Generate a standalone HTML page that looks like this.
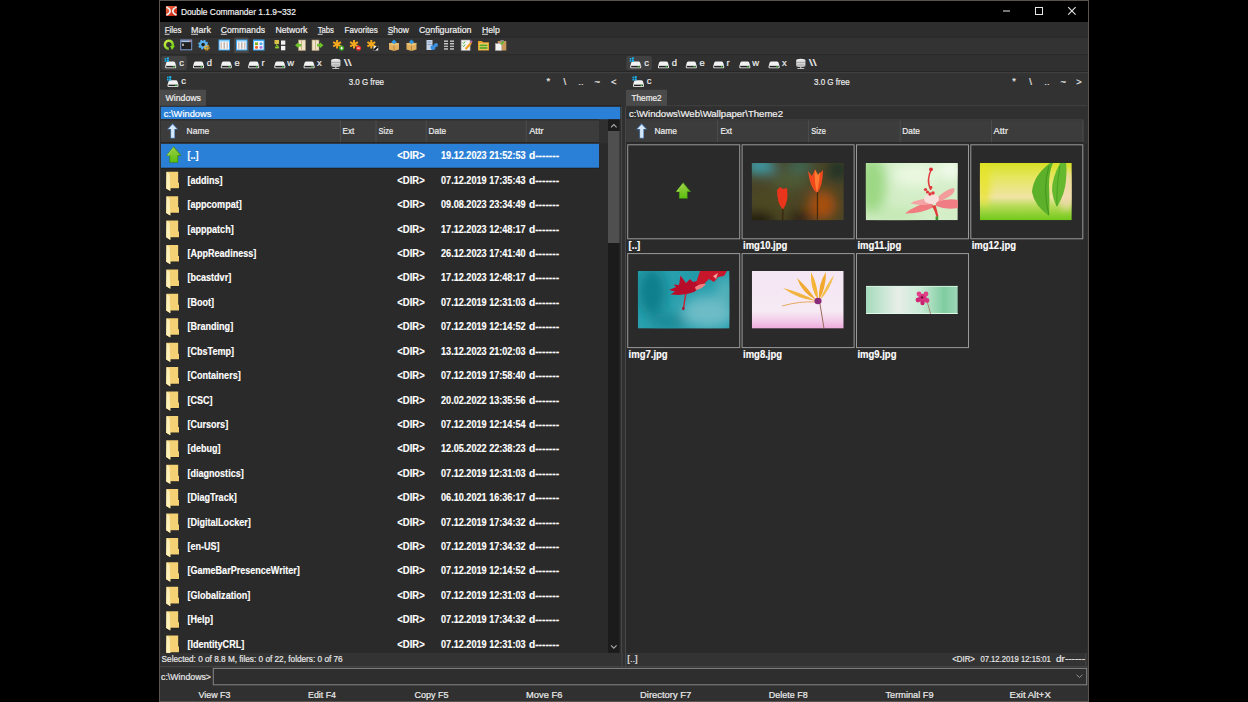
<!DOCTYPE html><html><head><meta charset="utf-8"><style>html,body{margin:0;padding:0;background:#000;overflow:hidden}svg{display:block}</style></head><body><svg width="1248" height="702" viewBox="0 0 1248 702" font-family='"Liberation Sans", sans-serif'><rect width="1248" height="702" fill="#000"/>
<rect x="159.00" y="0.00" width="930.00" height="702.00" fill="#5a544e" />
<rect x="160.00" y="1.00" width="928.00" height="700.00" fill="#303030" />
<rect x="160.00" y="72.00" width="928.00" height="34.00" fill="#323232" />
<rect x="160.00" y="1.00" width="928.00" height="21.00" fill="#000" />
<rect x="160.00" y="22.00" width="928.00" height="15.00" fill="#2d2d2d" />
<rect x="160.00" y="37.00" width="928.00" height="17.50" fill="#333333" />
<defs><linearGradient id="lg" x1="0" y1="0" x2="1" y2="1"><stop offset="0" stop-color="#f4704a"/><stop offset="1" stop-color="#c01808"/></linearGradient></defs><g transform="translate(165.9,5.9)"><rect width="11.1" height="10.2" rx="1.2" fill="url(#lg)"/><path d="M0.5 1 Q8 5.1 0.5 9.2" stroke="#eef4f4" stroke-width="1.6" fill="none"/><path d="M10.6 1 Q3.1 5.1 10.6 9.2" stroke="#eef4f4" stroke-width="1.6" fill="none"/></g>
<text x="180.90" y="14.50" font-size="9.4" fill="#f2f2f2" textLength="115.00" lengthAdjust="spacingAndGlyphs"  stroke="#f2f2f2" stroke-width="0.2">Double Commander 1.1.9~332</text>
<rect x="1003.00" y="10.50" width="7.00" height="1.00" fill="#e8e8e8" />
<rect x="1035.5" y="7.5" width="7" height="7" fill="none" stroke="#e8e8e8" stroke-width="1"/>
<path d="M1068.2 7.2 L1075.6 14.6 M1075.6 7.2 L1068.2 14.6" stroke="#e8e8e8" stroke-width="1.1"/>
<text x="164.65" y="32.60" font-size="9.4" fill="#f0f0f0" textLength="16.90" lengthAdjust="spacingAndGlyphs"  stroke="#f0f0f0" stroke-width="0.2">Files</text>
<rect x="164.65" y="33.80" width="5.00" height="0.90" fill="#e8e8e8" />
<text x="191.10" y="32.60" font-size="9.4" fill="#f0f0f0" textLength="20.00" lengthAdjust="spacingAndGlyphs"  stroke="#f0f0f0" stroke-width="0.2">Mark</text>
<rect x="191.10" y="33.80" width="7.00" height="0.90" fill="#e8e8e8" />
<text x="220.80" y="32.60" font-size="9.4" fill="#f0f0f0" textLength="44.30" lengthAdjust="spacingAndGlyphs"  stroke="#f0f0f0" stroke-width="0.2">Commands</text>
<rect x="220.80" y="33.80" width="6.00" height="0.90" fill="#e8e8e8" />
<text x="275.40" y="32.60" font-size="9.4" fill="#f0f0f0" textLength="32.10" lengthAdjust="spacingAndGlyphs"  stroke="#f0f0f0" stroke-width="0.2">Network</text>
<text x="317.70" y="32.60" font-size="9.4" fill="#f0f0f0" textLength="16.30" lengthAdjust="spacingAndGlyphs"  stroke="#f0f0f0" stroke-width="0.2">Tabs</text>
<rect x="317.70" y="33.80" width="5.00" height="0.90" fill="#e8e8e8" />
<text x="344.60" y="32.60" font-size="9.4" fill="#f0f0f0" textLength="33.10" lengthAdjust="spacingAndGlyphs"  stroke="#f0f0f0" stroke-width="0.2">Favorites</text>
<text x="387.70" y="32.60" font-size="9.4" fill="#f0f0f0" textLength="21.10" lengthAdjust="spacingAndGlyphs"  stroke="#f0f0f0" stroke-width="0.2">Show</text>
<rect x="387.70" y="33.80" width="5.00" height="0.90" fill="#e8e8e8" />
<text x="419.00" y="32.60" font-size="9.4" fill="#f0f0f0" textLength="52.50" lengthAdjust="spacingAndGlyphs"  stroke="#f0f0f0" stroke-width="0.2">Configuration</text>
<rect x="425.30" y="33.80" width="5.00" height="0.90" fill="#e8e8e8" />
<text x="482.00" y="32.60" font-size="9.4" fill="#f0f0f0" textLength="17.80" lengthAdjust="spacingAndGlyphs"  stroke="#f0f0f0" stroke-width="0.2">Help</text>
<rect x="482.00" y="33.80" width="6.00" height="0.90" fill="#e8e8e8" />
<rect x="160.00" y="36.60" width="928.00" height="1.00" fill="#272727" />
<rect x="234" y="37.4" width="15" height="15.6" rx="1.5" fill="#474747"/>
<g transform="translate(163.60,39.50) scale(1)"><defs><linearGradient id="rg" x1="0" y1="0" x2="1" y2="1"><stop offset="0" stop-color="#d4f24a"/><stop offset="1" stop-color="#5cc414"/></linearGradient></defs><path d="M5.2 9.2 A4 4 0 1 1 8.6 7.4" stroke="url(#rg)" stroke-width="2.5" fill="none"/><path d="M6.4 6.6 L11.4 6.2 L8.4 10.6 Z" fill="#80d818"/></g>
<g transform="translate(180.20,39.50) scale(1)"><rect x="0.5" y="0.5" width="11" height="9.8" fill="#202020" stroke="#7c9ccf" stroke-width="1"/><rect x="1" y="1" width="10" height="1.6" fill="#a8c4ec"/><rect x="9.4" y="1" width="1.2" height="1.2" fill="#e05050"/><rect x="2.1" y="4.2" width="1.4" height="2.2" fill="#e8e8e8"/></g>
<g transform="translate(197.80,39.50) scale(1)"><circle cx="5.3" cy="5.1" r="3.9" fill="none" stroke="#5ab4f4" stroke-width="2.2" stroke-dasharray="1.7 1.36"/><circle cx="5.3" cy="5.1" r="2.9" fill="none" stroke="#5ab4f4" stroke-width="2"/><circle cx="5.3" cy="5.1" r="1.1" fill="#141414"/><circle cx="9" cy="8.2" r="2.3" fill="none" stroke="#f4b21e" stroke-width="1.3" stroke-dasharray="1.1 0.7"/><circle cx="9" cy="8.2" r="1.7" fill="#f4b21e"/><circle cx="9" cy="8.2" r="0.7" fill="#2a70d8"/></g>
<g transform="translate(218.50,39.50) scale(1)"><rect x="0" y="0" width="11.5" height="11" fill="#3eaaf5"/><rect x="1" y="1.6" width="9.5" height="8.4" fill="#f6f6f6"/><rect x="1" y="0.8" width="9.5" height="1.2" fill="#9ad6ff"/><rect x="2" y="2.8" width="1.5" height="6.4" fill="#cfc2bc"/><rect x="5" y="2.8" width="1.5" height="6.4" fill="#bdb4b0"/><rect x="8" y="2.8" width="1.5" height="6.4" fill="#cfc2bc"/></g>
<g transform="translate(236.00,39.50) scale(1)"><rect x="0" y="0" width="11.5" height="11" fill="#3eaaf5"/><rect x="1" y="1.6" width="9.5" height="8.4" fill="#f6f6f6"/><rect x="1" y="0.8" width="9.5" height="1.2" fill="#9ad6ff"/><rect x="2" y="2.8" width="1.5" height="6.4" fill="#cfc2bc"/><rect x="5" y="2.8" width="1.5" height="6.4" fill="#bdb4b0"/><rect x="8" y="2.8" width="1.5" height="6.4" fill="#cfc2bc"/></g>
<g transform="translate(253.00,39.50) scale(1)"><rect x="0" y="0" width="11.5" height="11" fill="#3eaaf5"/><rect x="1" y="1.6" width="9.5" height="8.4" fill="#f6f6f6"/><rect x="2" y="3" width="3" height="2.6" fill="#7bb21a"/><rect x="6.5" y="3" width="3" height="2.6" rx="1" fill="#4aa6ee"/><rect x="2" y="6.6" width="3" height="2.6" rx="1" fill="#f2641e"/><rect x="6.5" y="6.6" width="3" height="2.6" rx="1" fill="#a77ae8"/></g>
<g transform="translate(274.00,39.50) scale(1)"><rect x="0.5" y="0.5" width="4.5" height="4" fill="#d8c04a"/><rect x="7" y="1" width="4.3" height="4.2" fill="#f2f2f2"/><rect x="7" y="6.4" width="4.3" height="4.4" fill="#f2f2f2"/><path d="M1 8 L5 8" stroke="#8ccf2a" stroke-width="1.8"/><path d="M2 5 L4 7" stroke="#8ccf2a" stroke-width="1.2"/></g>
<g transform="translate(295.00,39.50) scale(1)"><rect x="3.5" y="0.5" width="7" height="10.5" fill="#efe2c6" stroke="#a89470" stroke-width="0.6"/><rect x="6" y="0.5" width="1" height="10.5" fill="#c9b48c"/><path d="M0 5.8 L3.6 2.8 L3.6 4.6 L6.5 4.6 L6.5 7 L3.6 7 L3.6 8.8 Z" fill="#6cc22a"/></g>
<g transform="translate(311.50,39.50) scale(1)"><rect x="0.5" y="0.5" width="7" height="10.5" fill="#efe2c6" stroke="#a89470" stroke-width="0.6"/><rect x="3.5" y="0.5" width="1" height="10.5" fill="#c9b48c"/><path d="M12 5.8 L8.4 2.8 L8.4 4.6 L5.5 4.6 L5.5 7 L8.4 7 L8.4 8.8 Z" fill="#6cc22a"/></g>
<g transform="translate(332.60,39.50) scale(1)"><path d="M4.5 0.5 L4.5 9 M0.6 2.6 L8.4 6.9 M0.6 6.9 L8.4 2.6" stroke="#f2a81e" stroke-width="2"/><circle cx="9" cy="8.6" r="2.6" fill="#3ca21a"/><path d="M7.6 8.6 H10.4 M9 7.2 V10" stroke="#fff" stroke-width="0.9"/></g>
<g transform="translate(349.50,39.50) scale(1)"><path d="M4.5 0.5 L4.5 9 M0.6 2.6 L8.4 6.9 M0.6 6.9 L8.4 2.6" stroke="#f2a81e" stroke-width="2"/><circle cx="9" cy="8.6" r="2.6" fill="#e0302a"/><path d="M7.6 8.6 H10.4" stroke="#fff" stroke-width="1"/></g>
<g transform="translate(366.80,39.50) scale(1)"><path d="M4.5 0.5 L4.5 9 M0.6 2.6 L8.4 6.9 M0.6 6.9 L8.4 2.6" stroke="#f2a81e" stroke-width="2"/><rect x="6.8" y="6.6" width="4.6" height="4.4" fill="#f0f0f0"/><path d="M7.3 10.6 L11 7" stroke="#111" stroke-width="2"/></g>
<g transform="translate(388.00,39.50) scale(1)"><path d="M1 4 L6 2.5 L11 4 L11 10 L6 11.5 L1 10 Z" fill="#e0b060"/><path d="M6 5.5 L6 11.5" stroke="#b07c30" stroke-width="0.8"/><path d="M1 4 L6 5.5 L11 4" stroke="#f6d690" stroke-width="0.8" fill="none"/><path d="M6 0 L8.5 2.4 L6 4.8 L3.5 2.4 Z" fill="#2a9ae8"/></g>
<g transform="translate(405.50,39.50) scale(1)"><path d="M1 4 L6 2.5 L11 4 L11 10 L6 11.5 L1 10 Z" fill="#e0b060"/><path d="M6 5.5 L6 11.5" stroke="#b07c30" stroke-width="0.8"/><path d="M1 4 L6 5.5 L11 4" stroke="#f6d690" stroke-width="0.8" fill="none"/><path d="M6 0 L8.5 2.4 L6 4.8 L3.5 2.4 Z" fill="#2a9ae8"/></g>
<g transform="translate(426.00,39.50) scale(1)"><rect x="0.5" y="0.5" width="6" height="10" fill="#c8d4e8"/><rect x="1.5" y="2" width="4" height="1" fill="#8ca0c4"/><rect x="1.5" y="4.5" width="4" height="1" fill="#8ca0c4"/><circle cx="7" cy="8" r="2.5" fill="#3a8fe0"/><circle cx="10" cy="5.5" r="2" fill="#3a8fe0"/></g>
<g transform="translate(443.50,39.50) scale(1)"><rect x="0.5" y="1" width="4" height="1.3" fill="#d8d8d8"/><rect x="0.5" y="3.6" width="4" height="1.3" fill="#d8d8d8"/><rect x="0.5" y="6.2" width="4" height="1.3" fill="#bcbcbc"/><rect x="0.5" y="8.8" width="4" height="1.3" fill="#d8d8d8"/><rect x="6.5" y="1" width="4" height="1.3" fill="#d8d8d8"/><rect x="6.5" y="3.6" width="4" height="1.3" fill="#d8d8d8"/><rect x="6.5" y="6.2" width="4" height="1.3" fill="#bcbcbc"/><rect x="6.5" y="8.8" width="4" height="1.3" fill="#d8d8d8"/></g>
<g transform="translate(460.60,39.50) scale(1)"><rect x="0.5" y="0.5" width="9" height="10.5" fill="#f4f4f4" stroke="#9a9a9a" stroke-width="0.6"/><path d="M2 3 L3 4 L4.5 2 M2 6 L3 7 L4.5 5" stroke="#3aa82a" stroke-width="0.9" fill="none"/><path d="M5 9.5 L10.5 3.5" stroke="#f0a020" stroke-width="2.2"/><path d="M10 3 L11.5 1.6" stroke="#e070c0" stroke-width="1.6"/></g>
<g transform="translate(477.50,39.50) scale(1)"><path d="M0.5 1.5 L4.5 1.5 L5.5 2.8 L11.5 2.8 L11.5 11 L0.5 11 Z" fill="#e8a22a"/><rect x="1.5" y="3.8" width="9" height="6.4" fill="#f6d070"/><rect x="2" y="5" width="8" height="1.8" fill="#58a82a"/><rect x="2" y="7.6" width="8" height="1.8" fill="#58a82a"/></g>
<g transform="translate(494.80,39.50) scale(1)"><rect x="3" y="1.5" width="8.5" height="9.5" fill="#c8965a"/><rect x="5.5" y="0.5" width="3.5" height="2" fill="#8a8a8a"/><rect x="0.5" y="4" width="6.5" height="7" fill="#f4f4f4" stroke="#999" stroke-width="0.5"/><path d="M6 5 L9 2.2" stroke="#5cc02a" stroke-width="1.6"/></g>
<rect x="160.00" y="54.20" width="928.00" height="1.00" fill="#2a2a2a" />
<rect x="161.30" y="56" width="25.6" height="14" rx="2" fill="#414141"/>
<g transform="translate(164.70,60.60) scale(1)"><path d="M1.2 3.2 Q1.6 1 3 1 L9 1 Q10.4 1 10.8 3.2 L11.3 5 L0.7 5 Z" fill="#f2f2f2"/><rect x="0.5" y="4.6" width="11" height="3" rx="0.8" fill="#e6e6e6"/><rect x="1.5" y="5.4" width="9" height="1.4" fill="#222"/><rect x="8.2" y="5.5" width="1.6" height="1.2" fill="#2ec02a"/><rect x="0" y="-2.6" width="1.6" height="1.6" fill="#19b5f5"/><rect x="2.2" y="-3.2" width="2" height="2" fill="#19b5f5"/><rect x="0" y="-0.4" width="1.6" height="1.6" fill="#19b5f5"/><rect x="2.2" y="-0.8" width="2" height="2" fill="#19b5f5"/></g>
<text x="179.20" y="66.30" font-size="9.4" fill="#efefef"  stroke="#efefef" stroke-width="0.2">c</text>
<g transform="translate(192.50,60.60) scale(1)"><path d="M1.2 3.2 Q1.6 1 3 1 L9 1 Q10.4 1 10.8 3.2 L11.3 5 L0.7 5 Z" fill="#f2f2f2"/><rect x="0.5" y="4.6" width="11" height="3" rx="0.8" fill="#e6e6e6"/><rect x="1.5" y="5.4" width="9" height="1.4" fill="#222"/><rect x="8.2" y="5.5" width="1.6" height="1.2" fill="#2ec02a"/></g>
<text x="206.80" y="66.30" font-size="9.4" fill="#efefef"  stroke="#efefef" stroke-width="0.2">d</text>
<g transform="translate(220.30,60.60) scale(1)"><path d="M1.2 3.2 Q1.6 1 3 1 L9 1 Q10.4 1 10.8 3.2 L11.3 5 L0.7 5 Z" fill="#f2f2f2"/><rect x="0.5" y="4.6" width="11" height="3" rx="0.8" fill="#e6e6e6"/><rect x="1.5" y="5.4" width="9" height="1.4" fill="#222"/><rect x="8.2" y="5.5" width="1.6" height="1.2" fill="#2ec02a"/></g>
<text x="234.60" y="66.30" font-size="9.4" fill="#efefef"  stroke="#efefef" stroke-width="0.2">e</text>
<g transform="translate(247.70,60.60) scale(1)"><path d="M1.2 3.2 Q1.6 1 3 1 L9 1 Q10.4 1 10.8 3.2 L11.3 5 L0.7 5 Z" fill="#f2f2f2"/><rect x="0.5" y="4.6" width="11" height="3" rx="0.8" fill="#e6e6e6"/><rect x="1.5" y="5.4" width="9" height="1.4" fill="#222"/><rect x="8.2" y="5.5" width="1.6" height="1.2" fill="#2ec02a"/></g>
<text x="261.50" y="66.30" font-size="9.4" fill="#efefef"  stroke="#efefef" stroke-width="0.2">r</text>
<g transform="translate(273.80,60.60) scale(1)"><path d="M1.2 3.2 Q1.6 1 3 1 L9 1 Q10.4 1 10.8 3.2 L11.3 5 L0.7 5 Z" fill="#f2f2f2"/><rect x="0.5" y="4.6" width="11" height="3" rx="0.8" fill="#e6e6e6"/><rect x="1.5" y="5.4" width="9" height="1.4" fill="#222"/><rect x="8.2" y="5.5" width="1.6" height="1.2" fill="#2ec02a"/></g>
<text x="287.30" y="66.30" font-size="9.4" fill="#efefef"  stroke="#efefef" stroke-width="0.2">w</text>
<g transform="translate(303.10,60.60) scale(1)"><path d="M1.2 3.2 Q1.6 1 3 1 L9 1 Q10.4 1 10.8 3.2 L11.3 5 L0.7 5 Z" fill="#f2f2f2"/><rect x="0.5" y="4.6" width="11" height="3" rx="0.8" fill="#e6e6e6"/><rect x="1.5" y="5.4" width="9" height="1.4" fill="#222"/><rect x="8.2" y="5.5" width="1.6" height="1.2" fill="#2ec02a"/></g>
<text x="317.00" y="66.30" font-size="9.4" fill="#efefef"  stroke="#efefef" stroke-width="0.2">x</text>
<g transform="translate(330.80,58.60) scale(1)"><ellipse cx="5" cy="1.8" rx="4.6" ry="1.6" fill="#f0f0f0"/><rect x="0.4" y="1.8" width="9.2" height="5" fill="#d8d8d8"/><ellipse cx="5" cy="6.8" rx="4.6" ry="1.6" fill="#bdbdbd"/><rect x="0.4" y="3.6" width="9.2" height="0.7" fill="#9a9a9a"/><rect x="4.4" y="8" width="1.2" height="2" fill="#ccc"/><rect x="1.5" y="9.5" width="7" height="0.9" fill="#ccc"/></g>
<text x="344.00" y="66.30" font-size="9.4" fill="#efefef" textLength="7.60" lengthAdjust="spacingAndGlyphs"  stroke="#efefef" stroke-width="0.2">\\</text>
<rect x="626.30" y="56" width="25.6" height="14" rx="2" fill="#414141"/>
<g transform="translate(629.70,60.60) scale(1)"><path d="M1.2 3.2 Q1.6 1 3 1 L9 1 Q10.4 1 10.8 3.2 L11.3 5 L0.7 5 Z" fill="#f2f2f2"/><rect x="0.5" y="4.6" width="11" height="3" rx="0.8" fill="#e6e6e6"/><rect x="1.5" y="5.4" width="9" height="1.4" fill="#222"/><rect x="8.2" y="5.5" width="1.6" height="1.2" fill="#2ec02a"/><rect x="0" y="-2.6" width="1.6" height="1.6" fill="#19b5f5"/><rect x="2.2" y="-3.2" width="2" height="2" fill="#19b5f5"/><rect x="0" y="-0.4" width="1.6" height="1.6" fill="#19b5f5"/><rect x="2.2" y="-0.8" width="2" height="2" fill="#19b5f5"/></g>
<text x="644.20" y="66.30" font-size="9.4" fill="#efefef"  stroke="#efefef" stroke-width="0.2">c</text>
<g transform="translate(657.50,60.60) scale(1)"><path d="M1.2 3.2 Q1.6 1 3 1 L9 1 Q10.4 1 10.8 3.2 L11.3 5 L0.7 5 Z" fill="#f2f2f2"/><rect x="0.5" y="4.6" width="11" height="3" rx="0.8" fill="#e6e6e6"/><rect x="1.5" y="5.4" width="9" height="1.4" fill="#222"/><rect x="8.2" y="5.5" width="1.6" height="1.2" fill="#2ec02a"/></g>
<text x="671.80" y="66.30" font-size="9.4" fill="#efefef"  stroke="#efefef" stroke-width="0.2">d</text>
<g transform="translate(685.30,60.60) scale(1)"><path d="M1.2 3.2 Q1.6 1 3 1 L9 1 Q10.4 1 10.8 3.2 L11.3 5 L0.7 5 Z" fill="#f2f2f2"/><rect x="0.5" y="4.6" width="11" height="3" rx="0.8" fill="#e6e6e6"/><rect x="1.5" y="5.4" width="9" height="1.4" fill="#222"/><rect x="8.2" y="5.5" width="1.6" height="1.2" fill="#2ec02a"/></g>
<text x="699.60" y="66.30" font-size="9.4" fill="#efefef"  stroke="#efefef" stroke-width="0.2">e</text>
<g transform="translate(712.70,60.60) scale(1)"><path d="M1.2 3.2 Q1.6 1 3 1 L9 1 Q10.4 1 10.8 3.2 L11.3 5 L0.7 5 Z" fill="#f2f2f2"/><rect x="0.5" y="4.6" width="11" height="3" rx="0.8" fill="#e6e6e6"/><rect x="1.5" y="5.4" width="9" height="1.4" fill="#222"/><rect x="8.2" y="5.5" width="1.6" height="1.2" fill="#2ec02a"/></g>
<text x="726.50" y="66.30" font-size="9.4" fill="#efefef"  stroke="#efefef" stroke-width="0.2">r</text>
<g transform="translate(738.80,60.60) scale(1)"><path d="M1.2 3.2 Q1.6 1 3 1 L9 1 Q10.4 1 10.8 3.2 L11.3 5 L0.7 5 Z" fill="#f2f2f2"/><rect x="0.5" y="4.6" width="11" height="3" rx="0.8" fill="#e6e6e6"/><rect x="1.5" y="5.4" width="9" height="1.4" fill="#222"/><rect x="8.2" y="5.5" width="1.6" height="1.2" fill="#2ec02a"/></g>
<text x="752.30" y="66.30" font-size="9.4" fill="#efefef"  stroke="#efefef" stroke-width="0.2">w</text>
<g transform="translate(768.10,60.60) scale(1)"><path d="M1.2 3.2 Q1.6 1 3 1 L9 1 Q10.4 1 10.8 3.2 L11.3 5 L0.7 5 Z" fill="#f2f2f2"/><rect x="0.5" y="4.6" width="11" height="3" rx="0.8" fill="#e6e6e6"/><rect x="1.5" y="5.4" width="9" height="1.4" fill="#222"/><rect x="8.2" y="5.5" width="1.6" height="1.2" fill="#2ec02a"/></g>
<text x="782.00" y="66.30" font-size="9.4" fill="#efefef"  stroke="#efefef" stroke-width="0.2">x</text>
<g transform="translate(795.80,58.60) scale(1)"><ellipse cx="5" cy="1.8" rx="4.6" ry="1.6" fill="#f0f0f0"/><rect x="0.4" y="1.8" width="9.2" height="5" fill="#d8d8d8"/><ellipse cx="5" cy="6.8" rx="4.6" ry="1.6" fill="#bdbdbd"/><rect x="0.4" y="3.6" width="9.2" height="0.7" fill="#9a9a9a"/><rect x="4.4" y="8" width="1.2" height="2" fill="#ccc"/><rect x="1.5" y="9.5" width="7" height="0.9" fill="#ccc"/></g>
<text x="809.00" y="66.30" font-size="9.4" fill="#efefef" textLength="7.60" lengthAdjust="spacingAndGlyphs"  stroke="#efefef" stroke-width="0.2">\\</text>
<rect x="160.00" y="71.20" width="928.00" height="1.00" fill="#262626" />
<rect x="160.00" y="72.20" width="928.00" height="1.00" fill="#444444" />
<g transform="translate(167.00,79.30) scale(1)"><path d="M1.2 3.2 Q1.6 1 3 1 L9 1 Q10.4 1 10.8 3.2 L11.3 5 L0.7 5 Z" fill="#f2f2f2"/><rect x="0.5" y="4.6" width="11" height="3" rx="0.8" fill="#e6e6e6"/><rect x="1.5" y="5.4" width="9" height="1.4" fill="#222"/><rect x="8.2" y="5.5" width="1.6" height="1.2" fill="#2ec02a"/><rect x="0" y="-2.6" width="1.6" height="1.6" fill="#19b5f5"/><rect x="2.2" y="-3.2" width="2" height="2" fill="#19b5f5"/><rect x="0" y="-0.4" width="1.6" height="1.6" fill="#19b5f5"/><rect x="2.2" y="-0.8" width="2" height="2" fill="#19b5f5"/></g>
<text x="181.30" y="84.20" font-size="9.4" fill="#efefef"  stroke="#efefef" stroke-width="0.2">c</text>
<g transform="translate(632.50,79.30) scale(1)"><path d="M1.2 3.2 Q1.6 1 3 1 L9 1 Q10.4 1 10.8 3.2 L11.3 5 L0.7 5 Z" fill="#f2f2f2"/><rect x="0.5" y="4.6" width="11" height="3" rx="0.8" fill="#e6e6e6"/><rect x="1.5" y="5.4" width="9" height="1.4" fill="#222"/><rect x="8.2" y="5.5" width="1.6" height="1.2" fill="#2ec02a"/><rect x="0" y="-2.6" width="1.6" height="1.6" fill="#19b5f5"/><rect x="2.2" y="-3.2" width="2" height="2" fill="#19b5f5"/><rect x="0" y="-0.4" width="1.6" height="1.6" fill="#19b5f5"/><rect x="2.2" y="-0.8" width="2" height="2" fill="#19b5f5"/></g>
<text x="646.80" y="84.20" font-size="9.4" fill="#efefef"  stroke="#efefef" stroke-width="0.2">c</text>
<text x="348.75" y="85.00" font-size="9.4" fill="#efefef" textLength="35.30" lengthAdjust="spacingAndGlyphs"  stroke="#efefef" stroke-width="0.2">3.0 G free</text>
<text x="814.00" y="85.00" font-size="9.4" fill="#efefef" textLength="35.60" lengthAdjust="spacingAndGlyphs"  stroke="#efefef" stroke-width="0.2">3.0 G free</text>
<text x="548.30" y="83.50" font-size="9.4" text-anchor="middle" fill="#e6e6e6"  stroke="#e6e6e6" stroke-width="0.2">*</text>
<text x="564.90" y="84.50" font-size="9.4" text-anchor="middle" fill="#e6e6e6"  stroke="#e6e6e6" stroke-width="0.2">\</text>
<text x="580.90" y="84.50" font-size="9.4" text-anchor="middle" fill="#e6e6e6"  stroke="#e6e6e6" stroke-width="0.2">..</text>
<text x="597.20" y="84.50" font-size="9.4" text-anchor="middle" fill="#e6e6e6"  stroke="#e6e6e6" stroke-width="0.2">~</text>
<text x="613.70" y="84.50" font-size="9.4" text-anchor="middle" fill="#e6e6e6"  stroke="#e6e6e6" stroke-width="0.2">&lt;</text>
<text x="1014.00" y="83.50" font-size="9.4" text-anchor="middle" fill="#e6e6e6"  stroke="#e6e6e6" stroke-width="0.2">*</text>
<text x="1030.60" y="84.50" font-size="9.4" text-anchor="middle" fill="#e6e6e6"  stroke="#e6e6e6" stroke-width="0.2">\</text>
<text x="1046.90" y="84.50" font-size="9.4" text-anchor="middle" fill="#e6e6e6"  stroke="#e6e6e6" stroke-width="0.2">..</text>
<text x="1063.20" y="84.50" font-size="9.4" text-anchor="middle" fill="#e6e6e6"  stroke="#e6e6e6" stroke-width="0.2">~</text>
<text x="1079.00" y="84.50" font-size="9.4" text-anchor="middle" fill="#e6e6e6"  stroke="#e6e6e6" stroke-width="0.2">&gt;</text>
<rect x="160.00" y="105.40" width="462.00" height="1.00" fill="#24211e" />
<rect x="626.00" y="105.40" width="461.00" height="1.00" fill="#474747" />
<rect x="160.00" y="89.80" width="46.00" height="16.00" fill="#4a4a4a" />
<text x="165.50" y="100.90" font-size="9.4" fill="#f0f0f0" textLength="35.40" lengthAdjust="spacingAndGlyphs"  stroke="#f0f0f0" stroke-width="0.2">Windows</text>
<rect x="626.00" y="89.80" width="41.00" height="16.00" fill="#4a4a4a" />
<text x="631.50" y="100.90" font-size="9.4" fill="#f0f0f0" textLength="30.10" lengthAdjust="spacingAndGlyphs"  stroke="#f0f0f0" stroke-width="0.2">Theme2</text>
<rect x="160.80" y="106.80" width="459.40" height="12.40" fill="#2a7fd7" />
<text x="163.80" y="117.00" font-size="9.4" fill="#ffffff" textLength="47.60" lengthAdjust="spacingAndGlyphs"  stroke="#ffffff" stroke-width="0.2">c:\Windows</text>
<rect x="626.00" y="106.40" width="461.00" height="12.80" fill="#303030" />
<text x="629.00" y="117.00" font-size="9.4" fill="#f0f0f0" textLength="154.00" lengthAdjust="spacingAndGlyphs"  stroke="#f0f0f0" stroke-width="0.2">c:\Windows\Web\Wallpaper\Theme2</text>
<rect x="161.00" y="119.40" width="438.00" height="1.00" fill="#2c251e" />
<rect x="161.00" y="120.40" width="438.00" height="21.80" fill="#3c3c3c" />
<rect x="161.00" y="142.20" width="438.00" height="1.30" fill="#2a231c" />
<rect x="340.00" y="120.40" width="1.00" height="21.80" fill="#4c4c4c" />
<rect x="375.50" y="120.40" width="1.00" height="21.80" fill="#4c4c4c" />
<rect x="425.70" y="120.40" width="1.00" height="21.80" fill="#4c4c4c" />
<rect x="525.70" y="120.40" width="1.00" height="21.80" fill="#4c4c4c" />
<text x="186.60" y="134.30" font-size="9.4" fill="#efefef" textLength="22.60" lengthAdjust="spacingAndGlyphs"  stroke="#efefef" stroke-width="0.2">Name</text>
<text x="342.60" y="134.30" font-size="9.4" fill="#efefef" textLength="11.60" lengthAdjust="spacingAndGlyphs"  stroke="#efefef" stroke-width="0.2">Ext</text>
<text x="378.60" y="134.30" font-size="9.4" fill="#efefef" textLength="14.50" lengthAdjust="spacingAndGlyphs"  stroke="#efefef" stroke-width="0.2">Size</text>
<text x="428.60" y="134.30" font-size="9.4" fill="#efefef" textLength="17.50" lengthAdjust="spacingAndGlyphs"  stroke="#efefef" stroke-width="0.2">Date</text>
<text x="529.20" y="134.30" font-size="9.4" fill="#efefef" textLength="14.40" lengthAdjust="spacingAndGlyphs"  stroke="#efefef" stroke-width="0.2">Attr</text>
<g transform="translate(167.00,123.30) scale(1)"><path d="M5.6 0 L11.3 6.3 L8 6.3 L8 15.3 L3.4 15.3 L3.4 6.3 L0 6.3 Z" fill="#4a7cb8"/><path d="M5.6 1.2 L9.9 5.6 L7.3 5.6 L7.3 14.5 L4.1 14.5 L4.1 5.6 L1.4 5.6 Z" fill="#d6e8fa"/></g>
<rect x="626.20" y="119.40" width="457.10" height="1.00" fill="#474747" />
<rect x="626.20" y="120.40" width="457.10" height="21.80" fill="#3c3c3c" />
<rect x="626.20" y="142.20" width="457.10" height="1.30" fill="#262626" />
<rect x="716.90" y="120.40" width="1.00" height="21.80" fill="#4c4c4c" />
<rect x="807.90" y="120.40" width="1.00" height="21.80" fill="#4c4c4c" />
<rect x="899.70" y="120.40" width="1.00" height="21.80" fill="#4c4c4c" />
<rect x="991.00" y="120.40" width="1.00" height="21.80" fill="#4c4c4c" />
<rect x="1082.50" y="120.40" width="1.00" height="21.80" fill="#4c4c4c" />
<text x="654.50" y="134.30" font-size="9.4" fill="#efefef" textLength="22.50" lengthAdjust="spacingAndGlyphs"  stroke="#efefef" stroke-width="0.2">Name</text>
<text x="720.40" y="134.30" font-size="9.4" fill="#efefef" textLength="11.60" lengthAdjust="spacingAndGlyphs"  stroke="#efefef" stroke-width="0.2">Ext</text>
<text x="811.30" y="134.30" font-size="9.4" fill="#efefef" textLength="14.50" lengthAdjust="spacingAndGlyphs"  stroke="#efefef" stroke-width="0.2">Size</text>
<text x="902.30" y="134.30" font-size="9.4" fill="#efefef" textLength="17.50" lengthAdjust="spacingAndGlyphs"  stroke="#efefef" stroke-width="0.2">Date</text>
<text x="993.60" y="134.30" font-size="9.4" fill="#efefef" textLength="14.40" lengthAdjust="spacingAndGlyphs"  stroke="#efefef" stroke-width="0.2">Attr</text>
<g transform="translate(636.00,123.30) scale(1)"><path d="M5.6 0 L11.3 6.3 L8 6.3 L8 15.3 L3.4 15.3 L3.4 6.3 L0 6.3 Z" fill="#4a7cb8"/><path d="M5.6 1.2 L9.9 5.6 L7.3 5.6 L7.3 14.5 L4.1 14.5 L4.1 5.6 L1.4 5.6 Z" fill="#d6e8fa"/></g>
<rect x="161.00" y="143.50" width="447.00" height="509.50" fill="#2a2a2a" />
<defs><clipPath id="lc"><rect x="161" y="143.5" width="438" height="509.5"/></clipPath><linearGradient id="fg" x1="0" y1="0" x2="1" y2="0"><stop offset="0" stop-color="#fff1b8"/><stop offset="1" stop-color="#f3cf6a"/></linearGradient><linearGradient id="ga" x1="0" y1="0" x2="0" y2="1"><stop offset="0" stop-color="#9ccf44"/><stop offset="1" stop-color="#5cc010"/></linearGradient></defs>
<g clip-path="url(#lc)">
<rect x="161.00" y="143.60" width="438.00" height="24.42" fill="#2a7fd7" />
<rect x="161.00" y="167.72" width="438.00" height="1.00" fill="#231f1b" />
<g transform="translate(165.90,146.20) scale(1)"><path d="M7.8 0 L15.8 9.6 L12.3 9.6 L12.3 16.5 L3.5 16.5 L3.5 9.6 L0 9.6 Z" fill="#3f8a12"/><path d="M7.8 1.2 L14.2 8.9 L11.5 8.9 L11.5 15.7 L4.3 15.7 L4.3 8.9 L1.6 8.9 Z" fill="url(#ga)"/><path d="M7.8 1.2 L1.6 8.9 L4.3 8.9" stroke="#c8ec7a" stroke-width="0.6" fill="none"/></g>
<text transform="translate(187.50,159.40) scale(0.905,1)" font-size="10" font-weight="700" fill="#ffffff"  stroke="#ffffff" stroke-width="0.15">[..]</text>
<text x="424.70" y="159.40" font-size="10" font-weight="700" text-anchor="end" fill="#ffffff" textLength="27.40" lengthAdjust="spacingAndGlyphs"  stroke="#ffffff" stroke-width="0.15">&lt;DIR&gt;</text>
<text x="525.60" y="159.40" font-size="10" font-weight="700" text-anchor="end" fill="#ffffff" textLength="84.60" lengthAdjust="spacingAndGlyphs"  stroke="#ffffff" stroke-width="0.15">19.12.2023 21:52:53</text>
<text x="528.90" y="159.40" font-size="10" font-weight="700" fill="#ffffff" textLength="30.20" lengthAdjust="spacingAndGlyphs"  stroke="#ffffff" stroke-width="0.15">d-------</text>
<g transform="translate(166.00,171.52) scale(1)"><path d="M0 0 L12.3 0 L12.3 11 L13.2 11 L13.2 17 L4.2 17 L4.2 20 L0 17.5 Z" fill="#0d0d10" opacity="0.35" transform="translate(0.4,0.4)"/><path d="M0.6 0.2 L12.2 0.2 L12.2 11.2 L13 11.2 L13 16.8 L4.3 16.8 L4.3 19.6 L0.2 17 Z" fill="#f3d174"/><path d="M0.4 0.2 L3.6 2.2 L4.3 16.8 L4.3 19.6 L0.2 17 Z" fill="#fff0b8"/></g>
<text transform="translate(187.50,183.82) scale(0.905,1)" font-size="10" font-weight="700" fill="#ffffff"  stroke="#ffffff" stroke-width="0.15">[addins]</text>
<text x="424.70" y="183.82" font-size="10" font-weight="700" text-anchor="end" fill="#ffffff" textLength="27.40" lengthAdjust="spacingAndGlyphs"  stroke="#ffffff" stroke-width="0.15">&lt;DIR&gt;</text>
<text x="525.60" y="183.82" font-size="10" font-weight="700" text-anchor="end" fill="#ffffff" textLength="84.60" lengthAdjust="spacingAndGlyphs"  stroke="#ffffff" stroke-width="0.15">07.12.2019 17:35:43</text>
<text x="528.90" y="183.82" font-size="10" font-weight="700" fill="#ffffff" textLength="30.20" lengthAdjust="spacingAndGlyphs"  stroke="#ffffff" stroke-width="0.15">d-------</text>
<g transform="translate(166.00,195.93) scale(1)"><path d="M0 0 L12.3 0 L12.3 11 L13.2 11 L13.2 17 L4.2 17 L4.2 20 L0 17.5 Z" fill="#0d0d10" opacity="0.35" transform="translate(0.4,0.4)"/><path d="M0.6 0.2 L12.2 0.2 L12.2 11.2 L13 11.2 L13 16.8 L4.3 16.8 L4.3 19.6 L0.2 17 Z" fill="#f3d174"/><path d="M0.4 0.2 L3.6 2.2 L4.3 16.8 L4.3 19.6 L0.2 17 Z" fill="#fff0b8"/></g>
<text transform="translate(187.50,208.23) scale(0.905,1)" font-size="10" font-weight="700" fill="#ffffff"  stroke="#ffffff" stroke-width="0.15">[appcompat]</text>
<text x="424.70" y="208.23" font-size="10" font-weight="700" text-anchor="end" fill="#ffffff" textLength="27.40" lengthAdjust="spacingAndGlyphs"  stroke="#ffffff" stroke-width="0.15">&lt;DIR&gt;</text>
<text x="525.60" y="208.23" font-size="10" font-weight="700" text-anchor="end" fill="#ffffff" textLength="84.60" lengthAdjust="spacingAndGlyphs"  stroke="#ffffff" stroke-width="0.15">09.08.2023 23:34:49</text>
<text x="528.90" y="208.23" font-size="10" font-weight="700" fill="#ffffff" textLength="30.20" lengthAdjust="spacingAndGlyphs"  stroke="#ffffff" stroke-width="0.15">d-------</text>
<g transform="translate(166.00,220.35) scale(1)"><path d="M0 0 L12.3 0 L12.3 11 L13.2 11 L13.2 17 L4.2 17 L4.2 20 L0 17.5 Z" fill="#0d0d10" opacity="0.35" transform="translate(0.4,0.4)"/><path d="M0.6 0.2 L12.2 0.2 L12.2 11.2 L13 11.2 L13 16.8 L4.3 16.8 L4.3 19.6 L0.2 17 Z" fill="#f3d174"/><path d="M0.4 0.2 L3.6 2.2 L4.3 16.8 L4.3 19.6 L0.2 17 Z" fill="#fff0b8"/></g>
<text transform="translate(187.50,232.65) scale(0.905,1)" font-size="10" font-weight="700" fill="#ffffff"  stroke="#ffffff" stroke-width="0.15">[apppatch]</text>
<text x="424.70" y="232.65" font-size="10" font-weight="700" text-anchor="end" fill="#ffffff" textLength="27.40" lengthAdjust="spacingAndGlyphs"  stroke="#ffffff" stroke-width="0.15">&lt;DIR&gt;</text>
<text x="525.60" y="232.65" font-size="10" font-weight="700" text-anchor="end" fill="#ffffff" textLength="84.60" lengthAdjust="spacingAndGlyphs"  stroke="#ffffff" stroke-width="0.15">17.12.2023 12:48:17</text>
<text x="528.90" y="232.65" font-size="10" font-weight="700" fill="#ffffff" textLength="30.20" lengthAdjust="spacingAndGlyphs"  stroke="#ffffff" stroke-width="0.15">d-------</text>
<g transform="translate(166.00,244.76) scale(1)"><path d="M0 0 L12.3 0 L12.3 11 L13.2 11 L13.2 17 L4.2 17 L4.2 20 L0 17.5 Z" fill="#0d0d10" opacity="0.35" transform="translate(0.4,0.4)"/><path d="M0.6 0.2 L12.2 0.2 L12.2 11.2 L13 11.2 L13 16.8 L4.3 16.8 L4.3 19.6 L0.2 17 Z" fill="#f3d174"/><path d="M0.4 0.2 L3.6 2.2 L4.3 16.8 L4.3 19.6 L0.2 17 Z" fill="#fff0b8"/></g>
<text transform="translate(187.50,257.06) scale(0.905,1)" font-size="10" font-weight="700" fill="#ffffff"  stroke="#ffffff" stroke-width="0.15">[AppReadiness]</text>
<text x="424.70" y="257.06" font-size="10" font-weight="700" text-anchor="end" fill="#ffffff" textLength="27.40" lengthAdjust="spacingAndGlyphs"  stroke="#ffffff" stroke-width="0.15">&lt;DIR&gt;</text>
<text x="525.60" y="257.06" font-size="10" font-weight="700" text-anchor="end" fill="#ffffff" textLength="84.60" lengthAdjust="spacingAndGlyphs"  stroke="#ffffff" stroke-width="0.15">26.12.2023 17:41:40</text>
<text x="528.90" y="257.06" font-size="10" font-weight="700" fill="#ffffff" textLength="30.20" lengthAdjust="spacingAndGlyphs"  stroke="#ffffff" stroke-width="0.15">d-------</text>
<g transform="translate(166.00,269.18) scale(1)"><path d="M0 0 L12.3 0 L12.3 11 L13.2 11 L13.2 17 L4.2 17 L4.2 20 L0 17.5 Z" fill="#0d0d10" opacity="0.35" transform="translate(0.4,0.4)"/><path d="M0.6 0.2 L12.2 0.2 L12.2 11.2 L13 11.2 L13 16.8 L4.3 16.8 L4.3 19.6 L0.2 17 Z" fill="#f3d174"/><path d="M0.4 0.2 L3.6 2.2 L4.3 16.8 L4.3 19.6 L0.2 17 Z" fill="#fff0b8"/></g>
<text transform="translate(187.50,281.48) scale(0.905,1)" font-size="10" font-weight="700" fill="#ffffff"  stroke="#ffffff" stroke-width="0.15">[bcastdvr]</text>
<text x="424.70" y="281.48" font-size="10" font-weight="700" text-anchor="end" fill="#ffffff" textLength="27.40" lengthAdjust="spacingAndGlyphs"  stroke="#ffffff" stroke-width="0.15">&lt;DIR&gt;</text>
<text x="525.60" y="281.48" font-size="10" font-weight="700" text-anchor="end" fill="#ffffff" textLength="84.60" lengthAdjust="spacingAndGlyphs"  stroke="#ffffff" stroke-width="0.15">17.12.2023 12:48:17</text>
<text x="528.90" y="281.48" font-size="10" font-weight="700" fill="#ffffff" textLength="30.20" lengthAdjust="spacingAndGlyphs"  stroke="#ffffff" stroke-width="0.15">d-------</text>
<g transform="translate(166.00,293.60) scale(1)"><path d="M0 0 L12.3 0 L12.3 11 L13.2 11 L13.2 17 L4.2 17 L4.2 20 L0 17.5 Z" fill="#0d0d10" opacity="0.35" transform="translate(0.4,0.4)"/><path d="M0.6 0.2 L12.2 0.2 L12.2 11.2 L13 11.2 L13 16.8 L4.3 16.8 L4.3 19.6 L0.2 17 Z" fill="#f3d174"/><path d="M0.4 0.2 L3.6 2.2 L4.3 16.8 L4.3 19.6 L0.2 17 Z" fill="#fff0b8"/></g>
<text transform="translate(187.50,305.90) scale(0.905,1)" font-size="10" font-weight="700" fill="#ffffff"  stroke="#ffffff" stroke-width="0.15">[Boot]</text>
<text x="424.70" y="305.90" font-size="10" font-weight="700" text-anchor="end" fill="#ffffff" textLength="27.40" lengthAdjust="spacingAndGlyphs"  stroke="#ffffff" stroke-width="0.15">&lt;DIR&gt;</text>
<text x="525.60" y="305.90" font-size="10" font-weight="700" text-anchor="end" fill="#ffffff" textLength="84.60" lengthAdjust="spacingAndGlyphs"  stroke="#ffffff" stroke-width="0.15">07.12.2019 12:31:03</text>
<text x="528.90" y="305.90" font-size="10" font-weight="700" fill="#ffffff" textLength="30.20" lengthAdjust="spacingAndGlyphs"  stroke="#ffffff" stroke-width="0.15">d-------</text>
<g transform="translate(166.00,318.01) scale(1)"><path d="M0 0 L12.3 0 L12.3 11 L13.2 11 L13.2 17 L4.2 17 L4.2 20 L0 17.5 Z" fill="#0d0d10" opacity="0.35" transform="translate(0.4,0.4)"/><path d="M0.6 0.2 L12.2 0.2 L12.2 11.2 L13 11.2 L13 16.8 L4.3 16.8 L4.3 19.6 L0.2 17 Z" fill="#f3d174"/><path d="M0.4 0.2 L3.6 2.2 L4.3 16.8 L4.3 19.6 L0.2 17 Z" fill="#fff0b8"/></g>
<text transform="translate(187.50,330.31) scale(0.905,1)" font-size="10" font-weight="700" fill="#ffffff"  stroke="#ffffff" stroke-width="0.15">[Branding]</text>
<text x="424.70" y="330.31" font-size="10" font-weight="700" text-anchor="end" fill="#ffffff" textLength="27.40" lengthAdjust="spacingAndGlyphs"  stroke="#ffffff" stroke-width="0.15">&lt;DIR&gt;</text>
<text x="525.60" y="330.31" font-size="10" font-weight="700" text-anchor="end" fill="#ffffff" textLength="84.60" lengthAdjust="spacingAndGlyphs"  stroke="#ffffff" stroke-width="0.15">07.12.2019 12:14:52</text>
<text x="528.90" y="330.31" font-size="10" font-weight="700" fill="#ffffff" textLength="30.20" lengthAdjust="spacingAndGlyphs"  stroke="#ffffff" stroke-width="0.15">d-------</text>
<g transform="translate(166.00,342.43) scale(1)"><path d="M0 0 L12.3 0 L12.3 11 L13.2 11 L13.2 17 L4.2 17 L4.2 20 L0 17.5 Z" fill="#0d0d10" opacity="0.35" transform="translate(0.4,0.4)"/><path d="M0.6 0.2 L12.2 0.2 L12.2 11.2 L13 11.2 L13 16.8 L4.3 16.8 L4.3 19.6 L0.2 17 Z" fill="#f3d174"/><path d="M0.4 0.2 L3.6 2.2 L4.3 16.8 L4.3 19.6 L0.2 17 Z" fill="#fff0b8"/></g>
<text transform="translate(187.50,354.73) scale(0.905,1)" font-size="10" font-weight="700" fill="#ffffff"  stroke="#ffffff" stroke-width="0.15">[CbsTemp]</text>
<text x="424.70" y="354.73" font-size="10" font-weight="700" text-anchor="end" fill="#ffffff" textLength="27.40" lengthAdjust="spacingAndGlyphs"  stroke="#ffffff" stroke-width="0.15">&lt;DIR&gt;</text>
<text x="525.60" y="354.73" font-size="10" font-weight="700" text-anchor="end" fill="#ffffff" textLength="84.60" lengthAdjust="spacingAndGlyphs"  stroke="#ffffff" stroke-width="0.15">13.12.2023 21:02:03</text>
<text x="528.90" y="354.73" font-size="10" font-weight="700" fill="#ffffff" textLength="30.20" lengthAdjust="spacingAndGlyphs"  stroke="#ffffff" stroke-width="0.15">d-------</text>
<g transform="translate(166.00,366.84) scale(1)"><path d="M0 0 L12.3 0 L12.3 11 L13.2 11 L13.2 17 L4.2 17 L4.2 20 L0 17.5 Z" fill="#0d0d10" opacity="0.35" transform="translate(0.4,0.4)"/><path d="M0.6 0.2 L12.2 0.2 L12.2 11.2 L13 11.2 L13 16.8 L4.3 16.8 L4.3 19.6 L0.2 17 Z" fill="#f3d174"/><path d="M0.4 0.2 L3.6 2.2 L4.3 16.8 L4.3 19.6 L0.2 17 Z" fill="#fff0b8"/></g>
<text transform="translate(187.50,379.14) scale(0.905,1)" font-size="10" font-weight="700" fill="#ffffff"  stroke="#ffffff" stroke-width="0.15">[Containers]</text>
<text x="424.70" y="379.14" font-size="10" font-weight="700" text-anchor="end" fill="#ffffff" textLength="27.40" lengthAdjust="spacingAndGlyphs"  stroke="#ffffff" stroke-width="0.15">&lt;DIR&gt;</text>
<text x="525.60" y="379.14" font-size="10" font-weight="700" text-anchor="end" fill="#ffffff" textLength="84.60" lengthAdjust="spacingAndGlyphs"  stroke="#ffffff" stroke-width="0.15">07.12.2019 17:58:40</text>
<text x="528.90" y="379.14" font-size="10" font-weight="700" fill="#ffffff" textLength="30.20" lengthAdjust="spacingAndGlyphs"  stroke="#ffffff" stroke-width="0.15">d-------</text>
<g transform="translate(166.00,391.26) scale(1)"><path d="M0 0 L12.3 0 L12.3 11 L13.2 11 L13.2 17 L4.2 17 L4.2 20 L0 17.5 Z" fill="#0d0d10" opacity="0.35" transform="translate(0.4,0.4)"/><path d="M0.6 0.2 L12.2 0.2 L12.2 11.2 L13 11.2 L13 16.8 L4.3 16.8 L4.3 19.6 L0.2 17 Z" fill="#f3d174"/><path d="M0.4 0.2 L3.6 2.2 L4.3 16.8 L4.3 19.6 L0.2 17 Z" fill="#fff0b8"/></g>
<text transform="translate(187.50,403.56) scale(0.905,1)" font-size="10" font-weight="700" fill="#ffffff"  stroke="#ffffff" stroke-width="0.15">[CSC]</text>
<text x="424.70" y="403.56" font-size="10" font-weight="700" text-anchor="end" fill="#ffffff" textLength="27.40" lengthAdjust="spacingAndGlyphs"  stroke="#ffffff" stroke-width="0.15">&lt;DIR&gt;</text>
<text x="525.60" y="403.56" font-size="10" font-weight="700" text-anchor="end" fill="#ffffff" textLength="84.60" lengthAdjust="spacingAndGlyphs"  stroke="#ffffff" stroke-width="0.15">20.02.2022 13:35:56</text>
<text x="528.90" y="403.56" font-size="10" font-weight="700" fill="#ffffff" textLength="30.20" lengthAdjust="spacingAndGlyphs"  stroke="#ffffff" stroke-width="0.15">d-------</text>
<g transform="translate(166.00,415.68) scale(1)"><path d="M0 0 L12.3 0 L12.3 11 L13.2 11 L13.2 17 L4.2 17 L4.2 20 L0 17.5 Z" fill="#0d0d10" opacity="0.35" transform="translate(0.4,0.4)"/><path d="M0.6 0.2 L12.2 0.2 L12.2 11.2 L13 11.2 L13 16.8 L4.3 16.8 L4.3 19.6 L0.2 17 Z" fill="#f3d174"/><path d="M0.4 0.2 L3.6 2.2 L4.3 16.8 L4.3 19.6 L0.2 17 Z" fill="#fff0b8"/></g>
<text transform="translate(187.50,427.98) scale(0.905,1)" font-size="10" font-weight="700" fill="#ffffff"  stroke="#ffffff" stroke-width="0.15">[Cursors]</text>
<text x="424.70" y="427.98" font-size="10" font-weight="700" text-anchor="end" fill="#ffffff" textLength="27.40" lengthAdjust="spacingAndGlyphs"  stroke="#ffffff" stroke-width="0.15">&lt;DIR&gt;</text>
<text x="525.60" y="427.98" font-size="10" font-weight="700" text-anchor="end" fill="#ffffff" textLength="84.60" lengthAdjust="spacingAndGlyphs"  stroke="#ffffff" stroke-width="0.15">07.12.2019 12:14:54</text>
<text x="528.90" y="427.98" font-size="10" font-weight="700" fill="#ffffff" textLength="30.20" lengthAdjust="spacingAndGlyphs"  stroke="#ffffff" stroke-width="0.15">d-------</text>
<g transform="translate(166.00,440.09) scale(1)"><path d="M0 0 L12.3 0 L12.3 11 L13.2 11 L13.2 17 L4.2 17 L4.2 20 L0 17.5 Z" fill="#0d0d10" opacity="0.35" transform="translate(0.4,0.4)"/><path d="M0.6 0.2 L12.2 0.2 L12.2 11.2 L13 11.2 L13 16.8 L4.3 16.8 L4.3 19.6 L0.2 17 Z" fill="#f3d174"/><path d="M0.4 0.2 L3.6 2.2 L4.3 16.8 L4.3 19.6 L0.2 17 Z" fill="#fff0b8"/></g>
<text transform="translate(187.50,452.39) scale(0.905,1)" font-size="10" font-weight="700" fill="#ffffff"  stroke="#ffffff" stroke-width="0.15">[debug]</text>
<text x="424.70" y="452.39" font-size="10" font-weight="700" text-anchor="end" fill="#ffffff" textLength="27.40" lengthAdjust="spacingAndGlyphs"  stroke="#ffffff" stroke-width="0.15">&lt;DIR&gt;</text>
<text x="525.60" y="452.39" font-size="10" font-weight="700" text-anchor="end" fill="#ffffff" textLength="84.60" lengthAdjust="spacingAndGlyphs"  stroke="#ffffff" stroke-width="0.15">12.05.2022 22:38:23</text>
<text x="528.90" y="452.39" font-size="10" font-weight="700" fill="#ffffff" textLength="30.20" lengthAdjust="spacingAndGlyphs"  stroke="#ffffff" stroke-width="0.15">d-------</text>
<g transform="translate(166.00,464.51) scale(1)"><path d="M0 0 L12.3 0 L12.3 11 L13.2 11 L13.2 17 L4.2 17 L4.2 20 L0 17.5 Z" fill="#0d0d10" opacity="0.35" transform="translate(0.4,0.4)"/><path d="M0.6 0.2 L12.2 0.2 L12.2 11.2 L13 11.2 L13 16.8 L4.3 16.8 L4.3 19.6 L0.2 17 Z" fill="#f3d174"/><path d="M0.4 0.2 L3.6 2.2 L4.3 16.8 L4.3 19.6 L0.2 17 Z" fill="#fff0b8"/></g>
<text transform="translate(187.50,476.81) scale(0.905,1)" font-size="10" font-weight="700" fill="#ffffff"  stroke="#ffffff" stroke-width="0.15">[diagnostics]</text>
<text x="424.70" y="476.81" font-size="10" font-weight="700" text-anchor="end" fill="#ffffff" textLength="27.40" lengthAdjust="spacingAndGlyphs"  stroke="#ffffff" stroke-width="0.15">&lt;DIR&gt;</text>
<text x="525.60" y="476.81" font-size="10" font-weight="700" text-anchor="end" fill="#ffffff" textLength="84.60" lengthAdjust="spacingAndGlyphs"  stroke="#ffffff" stroke-width="0.15">07.12.2019 12:31:03</text>
<text x="528.90" y="476.81" font-size="10" font-weight="700" fill="#ffffff" textLength="30.20" lengthAdjust="spacingAndGlyphs"  stroke="#ffffff" stroke-width="0.15">d-------</text>
<g transform="translate(166.00,488.92) scale(1)"><path d="M0 0 L12.3 0 L12.3 11 L13.2 11 L13.2 17 L4.2 17 L4.2 20 L0 17.5 Z" fill="#0d0d10" opacity="0.35" transform="translate(0.4,0.4)"/><path d="M0.6 0.2 L12.2 0.2 L12.2 11.2 L13 11.2 L13 16.8 L4.3 16.8 L4.3 19.6 L0.2 17 Z" fill="#f3d174"/><path d="M0.4 0.2 L3.6 2.2 L4.3 16.8 L4.3 19.6 L0.2 17 Z" fill="#fff0b8"/></g>
<text transform="translate(187.50,501.22) scale(0.905,1)" font-size="10" font-weight="700" fill="#ffffff"  stroke="#ffffff" stroke-width="0.15">[DiagTrack]</text>
<text x="424.70" y="501.22" font-size="10" font-weight="700" text-anchor="end" fill="#ffffff" textLength="27.40" lengthAdjust="spacingAndGlyphs"  stroke="#ffffff" stroke-width="0.15">&lt;DIR&gt;</text>
<text x="525.60" y="501.22" font-size="10" font-weight="700" text-anchor="end" fill="#ffffff" textLength="84.60" lengthAdjust="spacingAndGlyphs"  stroke="#ffffff" stroke-width="0.15">06.10.2021 16:36:17</text>
<text x="528.90" y="501.22" font-size="10" font-weight="700" fill="#ffffff" textLength="30.20" lengthAdjust="spacingAndGlyphs"  stroke="#ffffff" stroke-width="0.15">d-------</text>
<g transform="translate(166.00,513.34) scale(1)"><path d="M0 0 L12.3 0 L12.3 11 L13.2 11 L13.2 17 L4.2 17 L4.2 20 L0 17.5 Z" fill="#0d0d10" opacity="0.35" transform="translate(0.4,0.4)"/><path d="M0.6 0.2 L12.2 0.2 L12.2 11.2 L13 11.2 L13 16.8 L4.3 16.8 L4.3 19.6 L0.2 17 Z" fill="#f3d174"/><path d="M0.4 0.2 L3.6 2.2 L4.3 16.8 L4.3 19.6 L0.2 17 Z" fill="#fff0b8"/></g>
<text transform="translate(187.50,525.64) scale(0.905,1)" font-size="10" font-weight="700" fill="#ffffff"  stroke="#ffffff" stroke-width="0.15">[DigitalLocker]</text>
<text x="424.70" y="525.64" font-size="10" font-weight="700" text-anchor="end" fill="#ffffff" textLength="27.40" lengthAdjust="spacingAndGlyphs"  stroke="#ffffff" stroke-width="0.15">&lt;DIR&gt;</text>
<text x="525.60" y="525.64" font-size="10" font-weight="700" text-anchor="end" fill="#ffffff" textLength="84.60" lengthAdjust="spacingAndGlyphs"  stroke="#ffffff" stroke-width="0.15">07.12.2019 17:34:32</text>
<text x="528.90" y="525.64" font-size="10" font-weight="700" fill="#ffffff" textLength="30.20" lengthAdjust="spacingAndGlyphs"  stroke="#ffffff" stroke-width="0.15">d-------</text>
<g transform="translate(166.00,537.76) scale(1)"><path d="M0 0 L12.3 0 L12.3 11 L13.2 11 L13.2 17 L4.2 17 L4.2 20 L0 17.5 Z" fill="#0d0d10" opacity="0.35" transform="translate(0.4,0.4)"/><path d="M0.6 0.2 L12.2 0.2 L12.2 11.2 L13 11.2 L13 16.8 L4.3 16.8 L4.3 19.6 L0.2 17 Z" fill="#f3d174"/><path d="M0.4 0.2 L3.6 2.2 L4.3 16.8 L4.3 19.6 L0.2 17 Z" fill="#fff0b8"/></g>
<text transform="translate(187.50,550.06) scale(0.905,1)" font-size="10" font-weight="700" fill="#ffffff"  stroke="#ffffff" stroke-width="0.15">[en-US]</text>
<text x="424.70" y="550.06" font-size="10" font-weight="700" text-anchor="end" fill="#ffffff" textLength="27.40" lengthAdjust="spacingAndGlyphs"  stroke="#ffffff" stroke-width="0.15">&lt;DIR&gt;</text>
<text x="525.60" y="550.06" font-size="10" font-weight="700" text-anchor="end" fill="#ffffff" textLength="84.60" lengthAdjust="spacingAndGlyphs"  stroke="#ffffff" stroke-width="0.15">07.12.2019 17:34:32</text>
<text x="528.90" y="550.06" font-size="10" font-weight="700" fill="#ffffff" textLength="30.20" lengthAdjust="spacingAndGlyphs"  stroke="#ffffff" stroke-width="0.15">d-------</text>
<g transform="translate(166.00,562.17) scale(1)"><path d="M0 0 L12.3 0 L12.3 11 L13.2 11 L13.2 17 L4.2 17 L4.2 20 L0 17.5 Z" fill="#0d0d10" opacity="0.35" transform="translate(0.4,0.4)"/><path d="M0.6 0.2 L12.2 0.2 L12.2 11.2 L13 11.2 L13 16.8 L4.3 16.8 L4.3 19.6 L0.2 17 Z" fill="#f3d174"/><path d="M0.4 0.2 L3.6 2.2 L4.3 16.8 L4.3 19.6 L0.2 17 Z" fill="#fff0b8"/></g>
<text transform="translate(187.50,574.47) scale(0.905,1)" font-size="10" font-weight="700" fill="#ffffff"  stroke="#ffffff" stroke-width="0.15">[GameBarPresenceWriter]</text>
<text x="424.70" y="574.47" font-size="10" font-weight="700" text-anchor="end" fill="#ffffff" textLength="27.40" lengthAdjust="spacingAndGlyphs"  stroke="#ffffff" stroke-width="0.15">&lt;DIR&gt;</text>
<text x="525.60" y="574.47" font-size="10" font-weight="700" text-anchor="end" fill="#ffffff" textLength="84.60" lengthAdjust="spacingAndGlyphs"  stroke="#ffffff" stroke-width="0.15">07.12.2019 12:14:52</text>
<text x="528.90" y="574.47" font-size="10" font-weight="700" fill="#ffffff" textLength="30.20" lengthAdjust="spacingAndGlyphs"  stroke="#ffffff" stroke-width="0.15">d-------</text>
<g transform="translate(166.00,586.59) scale(1)"><path d="M0 0 L12.3 0 L12.3 11 L13.2 11 L13.2 17 L4.2 17 L4.2 20 L0 17.5 Z" fill="#0d0d10" opacity="0.35" transform="translate(0.4,0.4)"/><path d="M0.6 0.2 L12.2 0.2 L12.2 11.2 L13 11.2 L13 16.8 L4.3 16.8 L4.3 19.6 L0.2 17 Z" fill="#f3d174"/><path d="M0.4 0.2 L3.6 2.2 L4.3 16.8 L4.3 19.6 L0.2 17 Z" fill="#fff0b8"/></g>
<text transform="translate(187.50,598.89) scale(0.905,1)" font-size="10" font-weight="700" fill="#ffffff"  stroke="#ffffff" stroke-width="0.15">[Globalization]</text>
<text x="424.70" y="598.89" font-size="10" font-weight="700" text-anchor="end" fill="#ffffff" textLength="27.40" lengthAdjust="spacingAndGlyphs"  stroke="#ffffff" stroke-width="0.15">&lt;DIR&gt;</text>
<text x="525.60" y="598.89" font-size="10" font-weight="700" text-anchor="end" fill="#ffffff" textLength="84.60" lengthAdjust="spacingAndGlyphs"  stroke="#ffffff" stroke-width="0.15">07.12.2019 12:31:03</text>
<text x="528.90" y="598.89" font-size="10" font-weight="700" fill="#ffffff" textLength="30.20" lengthAdjust="spacingAndGlyphs"  stroke="#ffffff" stroke-width="0.15">d-------</text>
<g transform="translate(166.00,611.00) scale(1)"><path d="M0 0 L12.3 0 L12.3 11 L13.2 11 L13.2 17 L4.2 17 L4.2 20 L0 17.5 Z" fill="#0d0d10" opacity="0.35" transform="translate(0.4,0.4)"/><path d="M0.6 0.2 L12.2 0.2 L12.2 11.2 L13 11.2 L13 16.8 L4.3 16.8 L4.3 19.6 L0.2 17 Z" fill="#f3d174"/><path d="M0.4 0.2 L3.6 2.2 L4.3 16.8 L4.3 19.6 L0.2 17 Z" fill="#fff0b8"/></g>
<text transform="translate(187.50,623.30) scale(0.905,1)" font-size="10" font-weight="700" fill="#ffffff"  stroke="#ffffff" stroke-width="0.15">[Help]</text>
<text x="424.70" y="623.30" font-size="10" font-weight="700" text-anchor="end" fill="#ffffff" textLength="27.40" lengthAdjust="spacingAndGlyphs"  stroke="#ffffff" stroke-width="0.15">&lt;DIR&gt;</text>
<text x="525.60" y="623.30" font-size="10" font-weight="700" text-anchor="end" fill="#ffffff" textLength="84.60" lengthAdjust="spacingAndGlyphs"  stroke="#ffffff" stroke-width="0.15">07.12.2019 17:34:32</text>
<text x="528.90" y="623.30" font-size="10" font-weight="700" fill="#ffffff" textLength="30.20" lengthAdjust="spacingAndGlyphs"  stroke="#ffffff" stroke-width="0.15">d-------</text>
<g transform="translate(166.00,635.42) scale(1)"><path d="M0 0 L12.3 0 L12.3 11 L13.2 11 L13.2 17 L4.2 17 L4.2 20 L0 17.5 Z" fill="#0d0d10" opacity="0.35" transform="translate(0.4,0.4)"/><path d="M0.6 0.2 L12.2 0.2 L12.2 11.2 L13 11.2 L13 16.8 L4.3 16.8 L4.3 19.6 L0.2 17 Z" fill="#f3d174"/><path d="M0.4 0.2 L3.6 2.2 L4.3 16.8 L4.3 19.6 L0.2 17 Z" fill="#fff0b8"/></g>
<text transform="translate(187.50,647.72) scale(0.905,1)" font-size="10" font-weight="700" fill="#ffffff"  stroke="#ffffff" stroke-width="0.15">[IdentityCRL]</text>
<text x="424.70" y="647.72" font-size="10" font-weight="700" text-anchor="end" fill="#ffffff" textLength="27.40" lengthAdjust="spacingAndGlyphs"  stroke="#ffffff" stroke-width="0.15">&lt;DIR&gt;</text>
<text x="525.60" y="647.72" font-size="10" font-weight="700" text-anchor="end" fill="#ffffff" textLength="84.60" lengthAdjust="spacingAndGlyphs"  stroke="#ffffff" stroke-width="0.15">07.12.2019 12:31:03</text>
<text x="528.90" y="647.72" font-size="10" font-weight="700" fill="#ffffff" textLength="30.20" lengthAdjust="spacingAndGlyphs"  stroke="#ffffff" stroke-width="0.15">d-------</text>
</g>
<rect x="608.00" y="119.40" width="11.60" height="533.40" fill="#1b1b1b" />
<rect x="608.00" y="131.00" width="11.60" height="112.00" fill="#4f4f4f" />
<path d="M611 127.3 L613.8 124.5 L616.6 127.3" stroke="#a8a8a8" stroke-width="1.2" fill="none"/>
<path d="M611 645.3 L613.8 648.1 L616.6 645.3" stroke="#a8a8a8" stroke-width="1.2" fill="none"/>
<rect x="621.00" y="106.00" width="1.00" height="561.00" fill="#474747" />
<rect x="625.00" y="106.00" width="1.00" height="561.00" fill="#474747" />
<rect x="626.20" y="143.50" width="461.00" height="509.50" fill="#2a2a2a" />
<defs>
<linearGradient id="i10" x1="0" y1="0" x2="1" y2="1"><stop offset="0" stop-color="#4b8a8c"/><stop offset="0.35" stop-color="#4a4a2c"/><stop offset="0.7" stop-color="#3a2a14"/><stop offset="1" stop-color="#1a120a"/></linearGradient>
<radialGradient id="i10b" cx="0.72" cy="0.65" r="0.4"><stop offset="0" stop-color="#c05a18" stop-opacity="0.9"/><stop offset="1" stop-color="#c05a18" stop-opacity="0"/></radialGradient>
<linearGradient id="i11" x1="0" y1="0" x2="1" y2="0"><stop offset="0" stop-color="#9fdc8c"/><stop offset="0.4" stop-color="#e6f6e0"/><stop offset="1" stop-color="#cfeec4"/></linearGradient>
<linearGradient id="i12" x1="0" y1="0" x2="0" y2="1"><stop offset="0" stop-color="#d6dc2a"/><stop offset="0.55" stop-color="#efe9a8"/><stop offset="0.8" stop-color="#a6d83a"/><stop offset="1" stop-color="#6cc21a"/></linearGradient>
<linearGradient id="i7" x1="0" y1="0" x2="1" y2="1"><stop offset="0" stop-color="#1e8c9c"/><stop offset="0.5" stop-color="#3aa6b4"/><stop offset="1" stop-color="#62b8c0"/></linearGradient>
<linearGradient id="i8" x1="0" y1="0" x2="0" y2="1"><stop offset="0" stop-color="#f6e4f0"/><stop offset="0.7" stop-color="#f4e0ec"/><stop offset="1" stop-color="#e6a4d0"/></linearGradient>
<linearGradient id="i9" x1="0" y1="0" x2="1" y2="0"><stop offset="0" stop-color="#9ad6b0"/><stop offset="0.35" stop-color="#e4f2e6"/><stop offset="1" stop-color="#6cc496"/></linearGradient>
</defs>
<rect x="627.70" y="144.80" width="112" height="94" fill="#2a2a2a" stroke="#9a9a9a" stroke-width="1"/>
<text transform="translate(628.60,249.30) scale(0.95,1)" font-size="10" font-weight="700" fill="#ffffff"  stroke="#ffffff" stroke-width="0.15">[..]</text>
<rect x="742.10" y="144.80" width="112" height="94" fill="#2a2a2a" stroke="#9a9a9a" stroke-width="1"/>
<text transform="translate(743.00,249.30) scale(0.95,1)" font-size="10" font-weight="700" fill="#ffffff"  stroke="#ffffff" stroke-width="0.15">img10.jpg</text>
<rect x="856.50" y="144.80" width="112" height="94" fill="#2a2a2a" stroke="#9a9a9a" stroke-width="1"/>
<text transform="translate(857.40,249.30) scale(0.95,1)" font-size="10" font-weight="700" fill="#ffffff"  stroke="#ffffff" stroke-width="0.15">img11.jpg</text>
<rect x="970.80" y="144.80" width="112" height="94" fill="#2a2a2a" stroke="#9a9a9a" stroke-width="1"/>
<text transform="translate(971.70,249.30) scale(0.95,1)" font-size="10" font-weight="700" fill="#ffffff"  stroke="#ffffff" stroke-width="0.15">img12.jpg</text>
<rect x="627.70" y="253.60" width="112" height="94" fill="#2a2a2a" stroke="#9a9a9a" stroke-width="1"/>
<text transform="translate(628.60,358.10) scale(0.95,1)" font-size="10" font-weight="700" fill="#ffffff"  stroke="#ffffff" stroke-width="0.15">img7.jpg</text>
<rect x="742.10" y="253.60" width="112" height="94" fill="#2a2a2a" stroke="#9a9a9a" stroke-width="1"/>
<text transform="translate(743.00,358.10) scale(0.95,1)" font-size="10" font-weight="700" fill="#ffffff"  stroke="#ffffff" stroke-width="0.15">img8.jpg</text>
<rect x="856.50" y="253.60" width="112" height="94" fill="#2a2a2a" stroke="#9a9a9a" stroke-width="1"/>
<text transform="translate(857.40,358.10) scale(0.95,1)" font-size="10" font-weight="700" fill="#ffffff"  stroke="#ffffff" stroke-width="0.15">img9.jpg</text>
<g transform="translate(675.40,182.30) scale(1.0)"><path d="M7.8 0 L15.8 9.6 L12.3 9.6 L12.3 16.5 L3.5 16.5 L3.5 9.6 L0 9.6 Z" fill="#3f8a12"/><path d="M7.8 1.2 L14.2 8.9 L11.5 8.9 L11.5 15.7 L4.3 15.7 L4.3 8.9 L1.6 8.9 Z" fill="url(#ga)"/><path d="M7.8 1.2 L1.6 8.9 L4.3 8.9" stroke="#c8ec7a" stroke-width="0.6" fill="none"/></g>
<defs><filter id="bl3" x="-20%" y="-20%" width="140%" height="140%"><feGaussianBlur stdDeviation="3"/></filter><filter id="bl6" x="-30%" y="-30%" width="160%" height="160%"><feGaussianBlur stdDeviation="6"/></filter><filter id="bl1" x="-20%" y="-20%" width="140%" height="140%"><feGaussianBlur stdDeviation="0.7"/></filter><clipPath id="c10"><rect x="751.8" y="163" width="92" height="57.3"/></clipPath><clipPath id="c11"><rect x="865.8" y="163" width="92" height="57.3"/></clipPath><clipPath id="c12"><rect x="979.8" y="163" width="92" height="57.3"/></clipPath><clipPath id="c7"><rect x="637.8" y="271" width="91.7" height="57.6"/></clipPath><clipPath id="c8"><rect x="751.8" y="271" width="91.9" height="57.6"/></clipPath><clipPath id="c9"><rect x="866" y="285.8" width="91.8" height="28.3"/></clipPath></defs>
<g clip-path="url(#c10)"><rect x="751.8" y="163" width="92" height="57.3" fill="#4a4426"/><g filter="url(#bl6)"><ellipse cx="760" cy="166" rx="16" ry="9" fill="#3e9aa6"/><ellipse cx="790" cy="180" rx="20" ry="10" fill="#4e5a34"/><ellipse cx="800" cy="166" rx="14" ry="6" fill="#3a6a5a"/><ellipse cx="772" cy="205" rx="20" ry="14" fill="#4e4a22"/><ellipse cx="758" cy="220" rx="18" ry="8" fill="#1a160c"/><ellipse cx="822" cy="205" rx="14" ry="15" fill="#a8500e"/><ellipse cx="838" cy="170" rx="10" ry="10" fill="#1e3028"/><ellipse cx="800" cy="218" rx="14" ry="6" fill="#2a1e0c"/></g><g filter="url(#bl1)"><path d="M808 171 L812 176 L815 169.5 L818 175 L823 170 Q823 186 817 193 Q810 188 808 171Z" fill="#f04a1c"/><path d="M815 169.5 L818 175 L820 172 Q819 185 817 193 Q814 182 815 169.5Z" fill="#ff7a30"/><rect x="816.8" y="192" width="1.3" height="28" fill="#4a2c10"/><path d="M777 190 L780 187 L783 189 L787 188 Q789 202 783 209.5 Q777 204 777 190Z" fill="#e8341a"/><rect x="782.2" y="209" width="1.2" height="11" fill="#3a2410"/></g></g>
<g clip-path="url(#c11)"><rect x="865.8" y="163" width="92" height="57.3" fill="#d4eec8"/><g filter="url(#bl6)"><ellipse cx="872" cy="185" rx="14" ry="30" fill="#9cd884"/><ellipse cx="915" cy="175" rx="22" ry="12" fill="#eaf8e0"/><ellipse cx="950" cy="170" rx="12" ry="10" fill="#f2fbec"/><ellipse cx="895" cy="215" rx="25" ry="8" fill="#c4e8b4"/></g><g filter="url(#bl1)"><path d="M905 213.5 Q915 205 931 202 L934 207 Q920 214 905 213.5Z" fill="#f07c80"/><path d="M910.5 203.5 Q920 198 931 199 L931 204 Q920 206 910.5 203.5Z" fill="#f4a4a4"/><path d="M937 198 Q946 189 954 188 Q956 192 950 196 Q944 200 938 202Z" fill="#f29c9c"/><path d="M936 202 Q948 198 958 200 L958 208 Q946 210 936 206Z" fill="#f07c84"/><ellipse cx="931.5" cy="199" rx="7.5" ry="5" fill="#f8e0dc"/><path d="M932 206 Q935 211 936.5 217 L938.5 216.5 Q937 210 935.5 205Z" fill="#e03c3c"/><rect x="935.6" y="216.5" width="2.6" height="3.5" fill="#3a9a2a"/><path d="M930.8 190 Q928 184 928.5 179 Q929.5 173 931 170" stroke="#e23a40" stroke-width="1.5" fill="none"/><circle cx="931" cy="169.3" r="1.9" fill="#e02a30"/><circle cx="925.5" cy="189.5" r="1.6" fill="#e2343a"/><circle cx="927.5" cy="192" r="1.6" fill="#e2343a"/><circle cx="930" cy="194" r="1.7" fill="#e2343a"/><circle cx="933" cy="193" r="1.7" fill="#e2343a"/><circle cx="931" cy="187.5" r="1.4" fill="#e2343a"/></g></g>
<defs><linearGradient id="i12g" x1="0" y1="0" x2="0" y2="1"><stop offset="0" stop-color="#d8e024"/><stop offset="0.25" stop-color="#e6e660"/><stop offset="0.6" stop-color="#f0e4a4"/><stop offset="0.75" stop-color="#b8dc58"/><stop offset="1" stop-color="#70c818"/></linearGradient></defs><g clip-path="url(#c12)"><rect x="979.8" y="163" width="92" height="57.3" fill="url(#i12g)"/><g filter="url(#bl3)"><ellipse cx="984" cy="185" rx="6" ry="22" fill="#e8e420" opacity="0.7"/><ellipse cx="1066" cy="190" rx="8" ry="20" fill="#f0d8b0" opacity="0.8"/></g><g filter="url(#bl1)"><path d="M1050 163 Q1033 176 1032 192 Q1034 205 1049 216 Q1050 200 1049 185 Q1049 172 1053 163Z" fill="#5cb02a"/><path d="M1049 166 Q1042 190 1049 215" stroke="#3a8e1c" stroke-width="0.8" fill="none"/><path d="M1060 163 Q1052 178 1052 190 Q1053 200 1057 207 Q1065 194 1066 180 Q1067 168 1066 163Z" fill="#66b82e"/><path d="M1060 166 Q1056 190 1057 206" stroke="#3a9a1a" stroke-width="0.7" fill="none"/></g></g>
<g clip-path="url(#c7)"><rect x="637.8" y="271" width="91.7" height="57.6" fill="#2aa0ae"/><g filter="url(#bl6)"><ellipse cx="652" cy="292" rx="14" ry="24" fill="#10808c"/><ellipse cx="708" cy="312" rx="26" ry="16" fill="#6cbcc6"/><ellipse cx="668" cy="322" rx="18" ry="8" fill="#1a8a96"/><ellipse cx="725" cy="292" rx="8" ry="14" fill="#58b2bc"/><ellipse cx="700" cy="276" rx="20" ry="6" fill="#1e96a4"/></g><g filter="url(#bl1)"><path d="M669 290 L676 287 L673.5 284.5 L679 285 L680.5 275.5 L686 283 L690 279 L693 282 L697 281 L701 287 L694 292 L687 294 L679 295 L670.5 294.5 L675 291.5 Z" fill="#b8102a"/><path d="M686 293 Q684.5 300 683.5 309" stroke="#c81a30" stroke-width="1.3" fill="none"/><ellipse cx="683.3" cy="308.5" rx="1.2" ry="1.8" fill="#b01028"/><path d="M696 283 L700 271 L727 271 L724 276 L718 277 L714 282 L709 279 L704 284 L699 286 Z" fill="#c8142c"/><path d="M695 287 Q701 283 706 284 Q702 289 696 290Z" fill="#f08080"/><path d="M713 276 L718 273 L716 279Z" fill="#f4a0a0"/></g></g>
<defs><linearGradient id="i8g" x1="0" y1="0" x2="0" y2="1"><stop offset="0" stop-color="#f4e6f4"/><stop offset="0.7" stop-color="#f6eaf4"/><stop offset="0.88" stop-color="#f2c8e8"/><stop offset="1" stop-color="#eeaadc"/></linearGradient></defs><g clip-path="url(#c8)"><rect x="751.8" y="271" width="91.9" height="57.6" fill="url(#i8g)"/><g filter="url(#bl1)"><path d="M783 288 Q800 292 816 301 Q798 299 783 288Z" fill="#f2b440"/><path d="M797 278 Q808 288 816 300 Q802 293 797 278Z" fill="#f0aa30"/><path d="M811 272 Q818 285 818 300 Q810 288 811 272Z" fill="#f4b438"/><path d="M826 272 Q826 288 819 300 Q818 284 826 272Z" fill="#f2a82a"/><path d="M834 275 Q830 290 820 300 Q826 285 834 275Z" fill="#f4c050"/><path d="M782 306 Q800 301 815 302" stroke="#e8a860" stroke-width="1" fill="none"/><ellipse cx="818" cy="301" rx="3.6" ry="3.2" fill="#8a2a7a"/><path d="M820 304 Q822 316 824 328.6" stroke="#9a6a58" stroke-width="1" fill="none"/></g></g>
<defs><linearGradient id="i9g" x1="0" y1="0" x2="1" y2="0"><stop offset="0" stop-color="#a4dcbc"/><stop offset="0.35" stop-color="#e8eee8"/><stop offset="0.6" stop-color="#c8ead4"/><stop offset="0.85" stop-color="#80ccA0"/><stop offset="1" stop-color="#9cd8b8"/></linearGradient></defs><g clip-path="url(#c9)"><rect x="866" y="285.8" width="91.8" height="28.3" fill="url(#i9g)"/><rect x="866" y="285.8" width="91.8" height="1" fill="#d8f4e4"/><rect x="866" y="313" width="91.8" height="1.1" fill="#e0f8ea"/><g filter="url(#bl1)"><path d="M927.5 303 Q929.5 309 930.5 314" stroke="#a0705a" stroke-width="0.8" fill="none"/><circle cx="922.5" cy="298" r="4.2" fill="#d8307e"/><circle cx="919" cy="294" r="2.4" fill="#e2408c"/><circle cx="926" cy="294" r="2.4" fill="#e04088"/><circle cx="918" cy="300" r="2.4" fill="#d02878"/><circle cx="927" cy="300.5" r="2.4" fill="#d8307e"/><circle cx="922.5" cy="303" r="2.2" fill="#c82070"/><circle cx="922" cy="297.5" r="1.3" fill="#7a1040"/></g></g>
<rect x="161.00" y="653.00" width="461.20" height="13.50" fill="#333333" />
<rect x="625.00" y="653.00" width="460.50" height="13.50" fill="#333333" />
<rect x="621.50" y="653.00" width="1.00" height="13.50" fill="#474747" />
<rect x="625.00" y="653.00" width="1.00" height="13.50" fill="#474747" />
<rect x="1085.30" y="653.00" width="1.00" height="13.50" fill="#474747" />
<rect x="160.00" y="666.20" width="928.00" height="1.00" fill="#474747" />
<text x="161.60" y="661.60" font-size="9.4" fill="#e8e8e8" textLength="181.10" lengthAdjust="spacingAndGlyphs"  stroke="#e8e8e8" stroke-width="0.2">Selected: 0 of 8.8 M, files: 0 of 22, folders: 0 of 76</text>
<text x="627.30" y="661.80" font-size="9.4" fill="#e8e8e8"  stroke="#e8e8e8" stroke-width="0.2">[..]</text>
<text x="952.20" y="661.80" font-size="9.4" fill="#e8e8e8" textLength="22.80" lengthAdjust="spacingAndGlyphs"  stroke="#e8e8e8" stroke-width="0.2">&lt;DIR&gt;</text>
<text x="980.40" y="661.80" font-size="9.4" fill="#e8e8e8" textLength="70.50" lengthAdjust="spacingAndGlyphs"  stroke="#e8e8e8" stroke-width="0.2">07.12.2019 12:15:01</text>
<text x="1056.00" y="661.80" font-size="9.4" fill="#e8e8e8" textLength="29.00" lengthAdjust="spacingAndGlyphs"  stroke="#e8e8e8" stroke-width="0.2">dr------</text>
<text x="161.00" y="680.20" font-size="9.4" fill="#e8e8e8" textLength="50.00" lengthAdjust="spacingAndGlyphs"  stroke="#e8e8e8" stroke-width="0.2">c:\Windows&gt;</text>
<rect x="213.3" y="668.4" width="873.4" height="16.4" fill="#2e2e2e" stroke="#858585" stroke-width="1"/>
<path d="M1076.5 674.6 L1079.5 677.6 L1082.5 674.6" stroke="#9a9a9a" stroke-width="0.9" fill="none"/>
<text x="198.55" y="698.00" font-size="9.4" fill="#ececec" textLength="31.90" lengthAdjust="spacingAndGlyphs"  stroke="#ececec" stroke-width="0.2">View F3</text>
<text x="308.00" y="698.00" font-size="9.4" fill="#ececec" textLength="28.00" lengthAdjust="spacingAndGlyphs"  stroke="#ececec" stroke-width="0.2">Edit F4</text>
<text x="414.55" y="698.00" font-size="9.4" fill="#ececec" textLength="33.90" lengthAdjust="spacingAndGlyphs"  stroke="#ececec" stroke-width="0.2">Copy F5</text>
<text x="526.05" y="698.00" font-size="9.4" fill="#ececec" textLength="36.30" lengthAdjust="spacingAndGlyphs"  stroke="#ececec" stroke-width="0.2">Move F6</text>
<text x="640.00" y="698.00" font-size="9.4" fill="#ececec" textLength="51.20" lengthAdjust="spacingAndGlyphs"  stroke="#ececec" stroke-width="0.2">Directory F7</text>
<text x="768.75" y="698.00" font-size="9.4" fill="#ececec" textLength="38.90" lengthAdjust="spacingAndGlyphs"  stroke="#ececec" stroke-width="0.2">Delete F8</text>
<text x="885.45" y="698.00" font-size="9.4" fill="#ececec" textLength="48.10" lengthAdjust="spacingAndGlyphs"  stroke="#ececec" stroke-width="0.2">Terminal F9</text>
<text x="1009.60" y="698.00" font-size="9.4" fill="#ececec" textLength="41.20" lengthAdjust="spacingAndGlyphs"  stroke="#ececec" stroke-width="0.2">Exit Alt+X</text>
<rect x="159.00" y="0.00" width="930.00" height="1.00" fill="#5a544e" />
<rect x="159.00" y="701.00" width="930.00" height="1.00" fill="#5a544e" /></svg></body></html>
